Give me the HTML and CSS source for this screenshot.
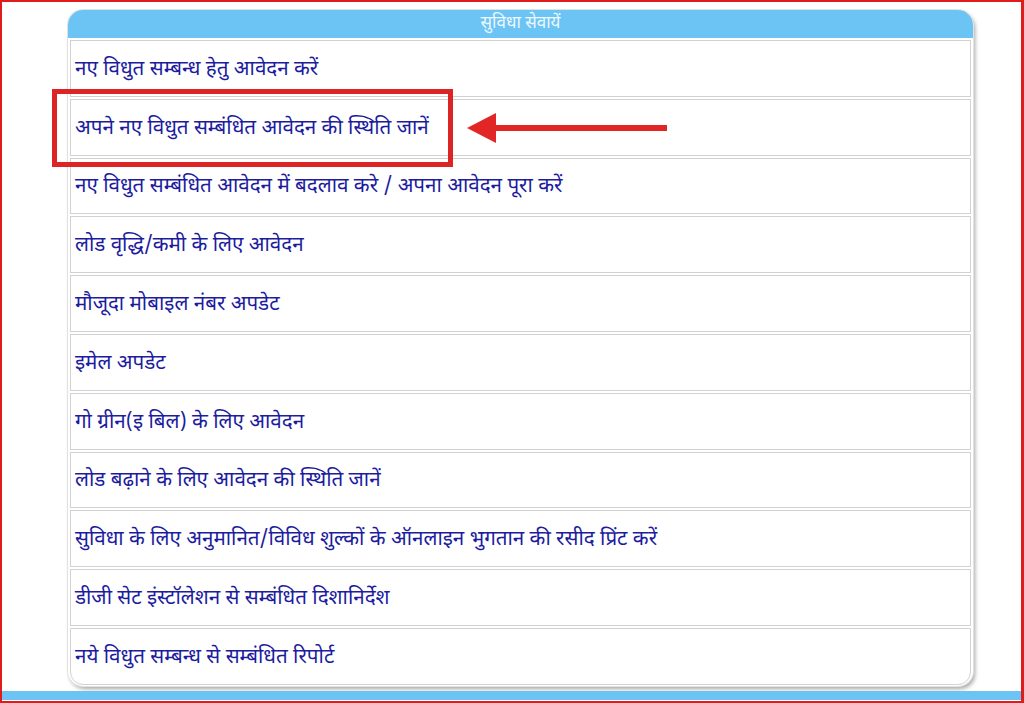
FILE: index.html
```html
<!DOCTYPE html>
<html lang="hi">
<head>
<meta charset="utf-8">
<title>सुविधा सेवायें</title>
<link rel="stylesheet" href="styles.css">
</head>
<body>
<div class="frame">
  <div class="panel">
    <div class="panel-head">सुविधा सेवायें</div>
    <div class="rows">
      <div class="row">नए विधुत सम्बन्ध हेतु आवेदन करें</div>
      <div class="row">अपने नए विधुत सम्बंधित आवेदन की स्थिति जानें</div>
      <div class="row">नए विधुत सम्बंधित आवेदन में बदलाव करे / अपना आवेदन पूरा करें</div>
      <div class="row">लोड वृद्धि/कमी के लिए आवेदन</div>
      <div class="row">मौजूदा मोबाइल नंबर अपडेट</div>
      <div class="row">इमेल अपडेट</div>
      <div class="row">गो ग्रीन(इ बिल) के लिए आवेदन</div>
      <div class="row">लोड बढ़ाने के लिए आवेदन की स्थिति जानें</div>
      <div class="row">सुविधा के लिए अनुमानित/विविध शुल्कों के ऑनलाइन भुगतान की रसीद प्रिंट करें</div>
      <div class="row">डीजी सेट इंस्टॉलेशन से सम्बंधित दिशानिर्देश</div>
      <div class="row row-last">नये विधुत सम्बन्ध से सम्बंधित रिपोर्ट</div>
    </div>
  </div>
  <div class="bottom-bar"></div>
  <div class="highlight"></div>
  <svg class="arrow" width="205" height="36" viewBox="0 0 205 36">
    <polygon points="2,18 31,3 31,33" fill="#e22626"/>
    <rect x="29" y="15" width="173" height="6" fill="#e22626"/>
  </svg>
</div>
</body>
</html>
```
FILE: styles.css
```css
html, body {
  margin: 0;
  padding: 0;
  background: #ffffff;
}
.frame {
  position: relative;
  width: 1024px;
  height: 703px;
  box-sizing: border-box;
  border: 2px solid #e01b1b;
  border-right-width: 3px;
  display: flex;
  flex-direction: column;
  font-family: "Noto Sans Devanagari", "Lohit Devanagari", "Noto Sans", sans-serif;
}
.panel {
  margin: 8px 0 0 66px;
  width: 905px;
  box-sizing: border-box;
  padding: 0 2px 1px 2px;
  border-radius: 15px;
  background: #ffffff;
  box-shadow: 0 0 0 1px #e2e2e2, 2px 3px 4px rgba(0, 0, 0, 0.35);
}
.panel-head {
  height: 28px;
  margin: 0 -2px;
  border-radius: 15px 15px 0 0;
  background: #6cc4f4;
  color: #eef8fe;
  font-size: 17px;
  line-height: 28px;
  text-align: center;
}
.rows {
  display: flex;
  flex-direction: column;
  gap: 2px;
  padding-top: 2px;
}
.row {
  height: 56.8px;
  box-sizing: border-box;
  border: 1px solid #d2d2d2;
  display: flex;
  align-items: center;
  padding: 3px 0 0 4px;
  color: #1c1c9e;
  font-size: 20.6px;
}
.row-last {
  border-radius: 0 0 13px 13px;
}
.bottom-bar {
  margin-top: auto;
  height: 9px;
  background: #6cc4f4;
  margin-bottom: 1px;
}
.highlight {
  position: absolute;
  left: 50px;
  top: 87px;
  width: 401px;
  height: 78px;
  box-sizing: border-box;
  border: 5px solid #dc2424;
}
.arrow {
  position: absolute;
  left: 463px;
  top: 108px;
}
```
